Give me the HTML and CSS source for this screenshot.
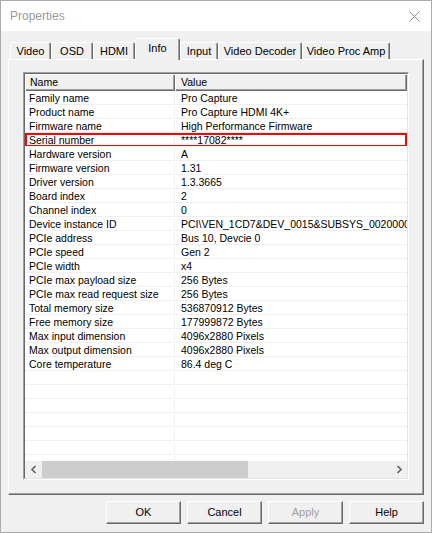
FILE: index.html
```html
<!DOCTYPE html>
<html>
<head>
<meta charset="utf-8">
<link rel="stylesheet" href="styles.css">
</head>
<body>
<div class="window">
  <div class="titlebar">
    <span class="title">Properties</span>
    <svg class="close" width="11" height="11" viewBox="0 0 11 11"><path d="M0.5 0.5 L10.5 10.5 M10.5 0.5 L0.5 10.5" stroke="#8a8a8a" stroke-width="1" fill="none"/></svg>
  </div>
  <div class="client">
    <div class="tabs">
      <div class="tab t-video">Video</div>
      <div class="tab t-osd">OSD</div>
      <div class="tab t-hdmi">HDMI</div>
      <div class="tab tab-active t-info">Info</div>
      <div class="tab t-input">Input</div>
      <div class="tab t-vd">Video Decoder</div>
      <div class="tab t-vpa">Video Proc Amp</div>
    </div>
    <div class="page">
      <div class="list">
        <div class="list-inner">
          <div class="lv-header">
            <div class="hcell hname">Name</div>
            <div class="hcell hvalue">Value</div>
          </div>
          <div class="lv-body">
            <div class="row"><span class="c-name">Family name</span><span class="c-value">Pro Capture</span></div>
            <div class="row"><span class="c-name">Product name</span><span class="c-value">Pro Capture HDMI 4K+</span></div>
            <div class="row"><span class="c-name">Firmware name</span><span class="c-value">High Performance Firmware</span></div>
            <div class="row marked"><span class="c-name">Serial number</span><span class="c-value">****17082****</span></div>
            <div class="row"><span class="c-name">Hardware version</span><span class="c-value">A</span></div>
            <div class="row"><span class="c-name">Firmware version</span><span class="c-value">1.31</span></div>
            <div class="row"><span class="c-name">Driver version</span><span class="c-value">1.3.3665</span></div>
            <div class="row"><span class="c-name">Board index</span><span class="c-value">2</span></div>
            <div class="row"><span class="c-name">Channel index</span><span class="c-value">0</span></div>
            <div class="row"><span class="c-name">Device instance ID</span><span class="c-value">PCI\VEN_1CD7&amp;DEV_0015&amp;SUBSYS_002000014CD7&amp;REV_00\4&amp;2A1B3C4D&amp;0&amp;0010</span></div>
            <div class="row"><span class="c-name">PCIe address</span><span class="c-value">Bus 10, Devcie 0</span></div>
            <div class="row"><span class="c-name">PCIe speed</span><span class="c-value">Gen 2</span></div>
            <div class="row"><span class="c-name">PCIe width</span><span class="c-value">x4</span></div>
            <div class="row"><span class="c-name">PCIe max payload size</span><span class="c-value">256 Bytes</span></div>
            <div class="row"><span class="c-name">PCIe max read request size</span><span class="c-value">256 Bytes</span></div>
            <div class="row"><span class="c-name">Total memory size</span><span class="c-value">536870912 Bytes</span></div>
            <div class="row"><span class="c-name">Free memory size</span><span class="c-value">177999872 Bytes</span></div>
            <div class="row"><span class="c-name">Max input dimension</span><span class="c-value">4096x2880 Pixels</span></div>
            <div class="row"><span class="c-name">Max output dimension</span><span class="c-value">4096x2880 Pixels</span></div>
            <div class="row"><span class="c-name">Core temperature</span><span class="c-value">86.4 deg C</span></div>
            <div class="row"><span class="c-name"></span><span class="c-value"></span></div>
            <div class="row"><span class="c-name"></span><span class="c-value"></span></div>
            <div class="row"><span class="c-name"></span><span class="c-value"></span></div>
            <div class="row"><span class="c-name"></span><span class="c-value"></span></div>
            <div class="row"><span class="c-name"></span><span class="c-value"></span></div>
            <div class="row"><span class="c-name"></span><span class="c-value"></span></div>
            <div class="row"><span class="c-name"></span><span class="c-value"></span></div>
            <div class="row"><span class="c-name"></span><span class="c-value"></span></div>
          </div>
          <div class="hscroll">
            <div class="sb-btn"><svg width="8" height="9" viewBox="0 0 8 9"><path d="M5.5 1 L2 4.5 L5.5 8" stroke="#606060" stroke-width="1.6" fill="none"/></svg></div>
            <div class="sb-track"><div class="sb-thumb"></div></div>
            <div class="sb-btn"><svg width="8" height="9" viewBox="0 0 8 9"><path d="M2.5 1 L6 4.5 L2.5 8" stroke="#606060" stroke-width="1.6" fill="none"/></svg></div>
          </div>
        </div>
      </div>
    </div>
    <div class="buttons">
      <div class="btn">OK</div>
      <div class="btn">Cancel</div>
      <div class="btn btn-disabled">Apply</div>
      <div class="btn">Help</div>
    </div>
  </div>
</div>
</body>
</html>
```
FILE: styles.css
```css
html, body {
  margin: 0;
  padding: 0;
  background: #f0f0f0;
}

.window {
  width: 432px;
  height: 533px;
  box-sizing: border-box;
  border: 1px solid #aaaaaa;
  display: flex;
  flex-direction: column;
  font-family: "Liberation Sans", Arial, sans-serif;
  color: #000;
}

.titlebar {
  height: 30px;
  flex: none;
  background: #ffffff;
  display: flex;
  align-items: center;
  justify-content: space-between;
  padding: 0 11px 0 9px;
}

.title {
  font-size: 12px;
  color: #999999;
}

.close {
  display: block;
}

.client {
  flex: 1;
  background: #f0f0f0;
  padding: 7px 7px 0 7px;
  display: flex;
  flex-direction: column;
}

.tabs {
  height: 21px;
  flex: none;
  display: flex;
  align-items: flex-end;
  padding-left: 2px;
}

.tab {
  height: 17px;
  box-sizing: border-box;
  border-top: 1px solid #ffffff;
  border-left: 1px solid #ffffff;
  border-right: 1px solid #696969;
  box-shadow: inset -1px 0 0 #a0a0a0;
  border-radius: 2px 2px 0 0;
  font-size: 11px;
  line-height: 16px;
  text-align: center;
  white-space: nowrap;
}

.t-video { width: 41px; }
.t-osd { width: 42px; }
.t-hdmi { width: 42px; }
.t-info { width: 45px; }
.t-input { width: 38px; }
.t-vd { width: 84px; }
.t-vpa { width: 88px; }

.tab-active {
  height: 22px;
  margin-bottom: -1px;
  background: #f0f0f0;
  position: relative;
  z-index: 1;
  padding-top: 1px;
}

.page {
  width: 416px;
  height: 436px;
  flex: none;
  box-sizing: border-box;
  border-top: 1px solid #ffffff;
  border-left: 1px solid #ffffff;
  border-right: 1px solid #696969;
  border-bottom: 1px solid #696969;
  box-shadow: inset -1px -1px 0 #a0a0a0;
  padding: 12px 0 0 14px;
}

.list {
  width: 386px;
  height: 408px;
  box-sizing: border-box;
  border: 1px solid;
  border-color: #a0a0a0 #ffffff #ffffff #a0a0a0;
}

.list-inner {
  height: 100%;
  box-sizing: border-box;
  border: 1px solid;
  border-color: #696969 #e3e3e3 #e3e3e3 #696969;
  background: #ffffff;
  display: flex;
  flex-direction: column;
  overflow: hidden;
}

.lv-header {
  height: 17px;
  flex: none;
  display: flex;
}

.hcell {
  height: 17px;
  box-sizing: border-box;
  background: #f0f0f0;
  box-shadow: inset 1px 1px 0 #ffffff, inset -1px -1px 0 #696969, inset -2px -2px 0 #a0a0a0;
  font-size: 10.5px;
  line-height: 17px;
  padding-left: 5px;
  white-space: nowrap;
}

.hname { width: 150px; flex: none; }
.hvalue { flex: 1; padding-left: 6px; }

.lv-body {
  flex: 1;
  overflow: hidden;
}

.row {
  height: 14px;
  box-sizing: border-box;
  display: flex;
  border-bottom: 1px solid #f0f0f0;
  font-size: 10.5px;
  line-height: 13px;
  padding-top: 1px;
  white-space: nowrap;
  overflow: hidden;
  position: relative;
}

.marked::after {
  content: "";
  position: absolute;
  top: 0;
  left: 0;
  right: 0;
  bottom: -1px;
  border: 2px solid #ff0000;
}

.c-name {
  width: 150px;
  flex: none;
  box-sizing: border-box;
  padding-left: 4px;
  border-right: 1px solid #f0f0f0;
}

.c-value {
  flex: none;
  padding-left: 6px;
}

.hscroll {
  height: 17px;
  flex: none;
  display: flex;
  background: #f0f0f0;
}

.sb-btn {
  width: 17px;
  flex: none;
  display: flex;
  align-items: center;
  justify-content: center;
}

.sb-btn svg { display: block; }

.sb-track {
  flex: 1;
  display: flex;
}

.sb-thumb {
  width: 206px;
  background: #cdcdcd;
}

.buttons {
  display: flex;
  justify-content: flex-end;
  gap: 6px;
  margin-top: 6px;
}

.btn {
  width: 75px;
  height: 23px;
  box-sizing: border-box;
  border: 1px solid;
  border-color: #ffffff #696969 #696969 #ffffff;
  box-shadow: inset -1px -1px 0 #a0a0a0;
  background: #f0f0f0;
  font-size: 11px;
  line-height: 20px;
  text-align: center;
}

.btn-disabled {
  color: #a0a0a0;
}
```
